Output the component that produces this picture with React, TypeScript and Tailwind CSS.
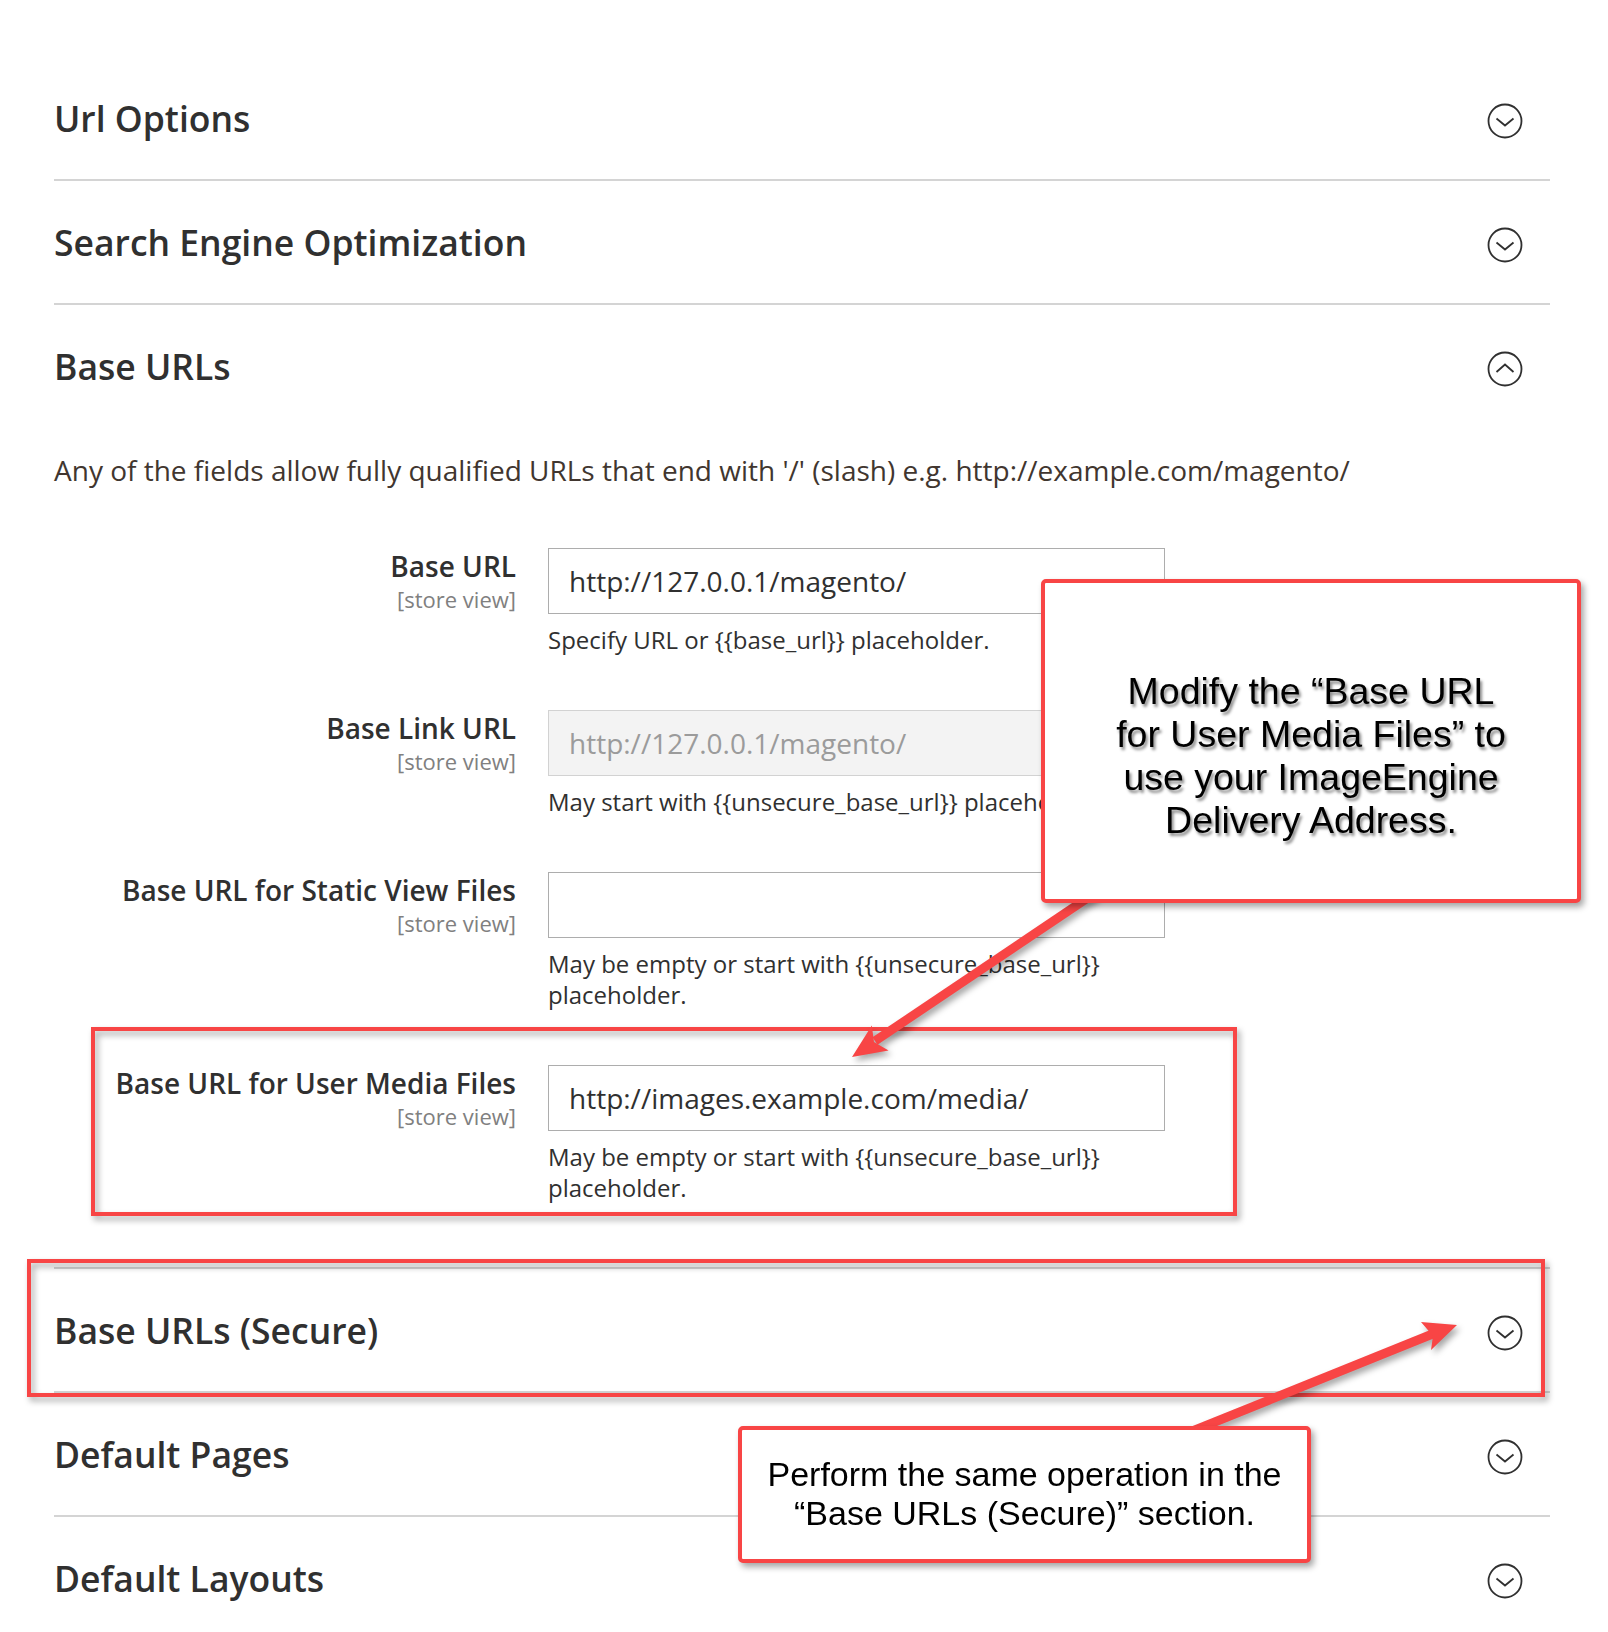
import React from "react";

function ChevronCircle({ up = false }: { up?: boolean }) {
  return (
    <svg width="36" height="36" viewBox="0 0 36 36" fill="none" className="shrink-0">
      <circle cx="18" cy="18" r="16.5" stroke="#303030" strokeWidth="1.8" />
      {up ? (
        <polyline points="9.5,21 18,13.5 26.5,21" stroke="#303030" strokeWidth="1.8" strokeLinejoin="miter" />
      ) : (
        <polyline points="9.5,15.5 18,22.5 26.5,15.5" stroke="#303030" strokeWidth="1.8" strokeLinejoin="miter" />
      )}
    </svg>
  );
}

function Header({ title, open = false }: { title: string; open?: boolean }) {
  return (
    <div className="flex h-[122px] items-start justify-between">
      <h2 className="mt-[41px] text-[35.5px] leading-[40px] font-semibold text-[#303030]">{title}</h2>
      <div className="mt-[46px] mr-[27px]">
        <ChevronCircle up={open} />
      </div>
    </div>
  );
}

function Section({ title }: { title: string }) {
  return (
    <div className="border-b-2 border-[#d4d4d4]">
      <Header title={title} />
    </div>
  );
}

type Row = {
  label: string;
  value: string;
  disabled?: boolean;
  note: React.ReactNode;
};

function Field({ row }: { row: Row }) {
  return (
    <div className="flex gap-[32px]">
      <div className="w-[462px] shrink-0 pt-[2px] text-right">
        <div className="text-[28px] leading-[33.6px] font-semibold text-[#303030]">{row.label}</div>
        <div className="text-[22px] leading-[30px] text-[#808080]">[store view]</div>
      </div>
      <div className="w-[617px] shrink-0">
        <input
          readOnly
          value={row.value}
          className={
            row.disabled
              ? "block h-[66px] w-full border border-[#d2d2d2] bg-[#f3f3f3] px-[20px] text-[28px] text-[#9b9b9b] outline-none"
              : "block h-[66px] w-full border border-[#adadad] bg-white px-[20px] text-[28px] text-[#303030] outline-none"
          }
        />
        <div className="mt-[10px] text-[24px] leading-[31px] text-[#303030]">{row.note}</div>
      </div>
    </div>
  );
}

const rows: Row[] = [
  {
    label: "Base URL",
    value: "http://127.0.0.1/magento/",
    note: "Specify URL or {{base_url}} placeholder.",
  },
  {
    label: "Base Link URL",
    value: "http://127.0.0.1/magento/",
    disabled: true,
    note: "May start with {{unsecure_base_url}} placeholder.",
  },
  {
    label: "Base URL for Static View Files",
    value: "",
    note: (
      <>
        May be empty or start with {"{{unsecure_base_url}}"}
        <br />
        placeholder.
      </>
    ),
  },
  {
    label: "Base URL for User Media Files",
    value: "http://images.example.com/media/",
    note: (
      <>
        May be empty or start with {"{{unsecure_base_url}}"}
        <br />
        placeholder.
      </>
    ),
  },
];

const RED = "#f84545";

export default function App() {
  return (
    <div className="relative h-[1632px] w-[1608px] overflow-hidden bg-white font-['Open_Sans',sans-serif] text-[#303030]">
      <div className="ml-[54px] w-[1496px] pt-[57px]">
        <Section title="Url Options" />
        <Section title="Search Engine Optimization" />
        <div className="border-b-2 border-[#d4d4d4] pb-[64px]">
          <Header title="Base URLs" open />
          <p className="mt-[24px] text-[28px] leading-[39px] text-[#41362f]">
            Any of the fields allow fully qualified URLs that end with '/' (slash) e.g. http://example.com/magento/
          </p>
          <div className="mt-[58px] flex flex-col gap-[55px]">
            {rows.map((r) => (
              <Field key={r.label} row={r} />
            ))}
          </div>
        </div>
        <Section title="Base URLs (Secure)" />
        <Section title="Default Pages" />
        <Section title="Default Layouts" />
      </div>

      {/* highlight boxes */}
      <div className="pointer-events-none absolute left-[91px] top-[1027px] h-[189px] w-[1146px] border-4 border-[#f84545] drop-shadow-[3px_4px_3px_rgba(0,0,0,0.35)]" />
      <div className="pointer-events-none absolute left-[27px] top-[1259px] h-[138px] w-[1518px] border-4 border-[#f84545] drop-shadow-[3px_4px_3px_rgba(0,0,0,0.35)]" />

      {/* arrows */}
      <svg
        className="pointer-events-none absolute left-0 top-0 drop-shadow-[3px_4px_3px_rgba(0,0,0,0.35)]"
        width="1608"
        height="1632"
        viewBox="0 0 1608 1632"
      >
        <line x1="1095" y1="893" x2="875" y2="1041" stroke={RED} strokeWidth="9" />
        <polygon points="852,1057 871.8,1025.6 874,1042 888.6,1050.4" fill={RED} />
        <line x1="1190" y1="1432" x2="1435" y2="1333" stroke={RED} strokeWidth="9" />
        <polygon points="1457,1325 1421,1322 1433,1336 1431,1350" fill={RED} />
      </svg>

      {/* callout 1 */}
      <div className="absolute left-[1041px] top-[579px] h-[324px] w-[540px] rounded-[5px] border-4 border-[#f84545] bg-white pt-[87px] text-center font-['Liberation_Sans',Arial,sans-serif] text-[37.5px] leading-[43px] text-black drop-shadow-[3px_4px_3px_rgba(0,0,0,0.35)] [text-shadow:2px_3px_3px_rgba(0,0,0,0.45)]">
        <div className="whitespace-nowrap">Modify the “Base URL</div>
        <div className="whitespace-nowrap">for User Media Files” to</div>
        <div className="whitespace-nowrap">use your ImageEngine</div>
        <div className="whitespace-nowrap">Delivery Address.</div>
      </div>

      {/* callout 2 */}
      <div className="absolute left-[738px] top-[1426px] h-[137px] w-[573px] rounded-[5px] border-4 border-[#f84545] bg-white pt-[25px] text-center font-['Liberation_Sans',Arial,sans-serif] text-[34px] leading-[39px] text-black drop-shadow-[3px_4px_3px_rgba(0,0,0,0.35)]">
        <div className="whitespace-nowrap">Perform the same operation in the</div>
        <div className="whitespace-nowrap">“Base URLs (Secure)” section.</div>
      </div>
    </div>
  );
}
